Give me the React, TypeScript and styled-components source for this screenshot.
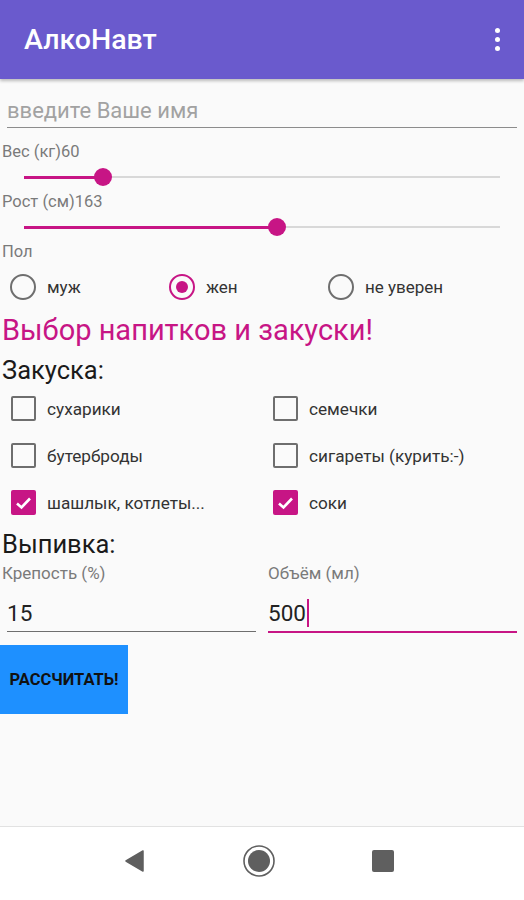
import React from 'react';
import styled, { createGlobalStyle } from 'styled-components';

const ACCENT = '#c71585';
const PRIMARY = '#6a5acd';

const GlobalStyle = createGlobalStyle`
  html, body {
    margin: 0;
    padding: 0;
    background: #fafafa;
  }
  body {
    font-family: Roboto, "Noto Sans", "Liberation Sans", sans-serif;
  }
`;

const Screen = styled.div`
  display: flex;
  flex-direction: column;
  width: 524px;
  height: 900px;
  background: #fafafa;
  overflow: hidden;
`;

const AppBar = styled.header`
  display: flex;
  align-items: center;
  justify-content: space-between;
  height: 79px;
  padding: 0 22px 0 24px;
  background: ${PRIMARY};
  box-shadow: 0 2px 3px rgba(0, 0, 0, 0.25);
  position: relative;
  z-index: 1;
`;

const Title = styled.h1`
  margin: 0;
  color: #fff;
  font-size: 28.5px;
  font-weight: 500;
`;

const MenuDots = styled.div`
  display: flex;
  flex-direction: column;
  gap: 4px;
  padding: 0 2px;

  span {
    width: 5px;
    height: 5px;
    border-radius: 50%;
    background: #fff;
  }
`;

const Main = styled.main`
  flex: 1;
  display: flex;
  flex-direction: column;
`;

const NameField = styled.div`
  margin: 15px 7px 0 7px;
  height: 33px;
  line-height: 33px;
  border-bottom: 1.5px solid #8c8c8c;
  font-size: 22px;
  color: #a2a2a2;
`;

const FieldLabel = styled.div<{ $top?: number; $indent?: number; $size?: number }>`
  margin-top: ${(p) => p.$top ?? 0}px;
  padding-left: ${(p) => p.$indent ?? 2}px;
  height: 20px;
  line-height: 20px;
  font-size: ${(p) => p.$size ?? 16.5}px;
  color: #7a7a7a;
  white-space: nowrap;
`;

const SliderRow = styled.div`
  position: relative;
  height: 30px;
  margin: 0 24px;
`;

const Track = styled.div`
  position: absolute;
  left: 0;
  right: 0;
  top: 14px;
  height: 2px;
  background: #d8d8d8;
`;

const ActiveTrack = styled.div`
  position: absolute;
  left: 0;
  top: 14px;
  height: 3px;
  background: ${ACCENT};
`;

const Thumb = styled.div`
  position: absolute;
  top: 6px;
  width: 18px;
  height: 18px;
  margin-left: -9px;
  border-radius: 50%;
  background: ${ACCENT};
`;

const RadioGroup = styled.div`
  display: grid;
  grid-template-columns: 159px 159px 1fr;
  height: 40px;
  margin-top: 5px;
  align-items: center;
`;

const RadioItem = styled.label`
  display: flex;
  align-items: center;
  gap: 11px;
  padding-left: 10px;
  font-size: 17px;
  color: #333;
`;

const RadioCircle = styled.span<{ $checked?: boolean }>`
  box-sizing: border-box;
  display: flex;
  align-items: center;
  justify-content: center;
  width: 26px;
  height: 26px;
  border-radius: 50%;
  border: 2.5px solid ${(p) => (p.$checked ? ACCENT : '#6e6e6e')};

  &::after {
    content: '';
    display: ${(p) => (p.$checked ? 'block' : 'none')};
    width: 12px;
    height: 12px;
    border-radius: 50%;
    background: ${ACCENT};
  }
`;

const Heading = styled.h2`
  margin: 6px 0 0 2px;
  height: 34px;
  line-height: 34px;
  font-size: 29px;
  font-weight: 400;
  color: ${ACCENT};
  white-space: nowrap;
`;

const SectionTitle = styled.h3<{ $top: number }>`
  margin: ${(p) => p.$top}px 0 0 2px;
  height: 30px;
  line-height: 30px;
  font-size: 25.5px;
  font-weight: 400;
  color: #1a1a1a;
`;

const CheckGrid = styled.div`
  display: grid;
  grid-template-columns: 262px 1fr;
  grid-auto-rows: 47px;
`;

const CheckItem = styled.label`
  display: flex;
  align-items: center;
  gap: 11px;
  padding-left: 11px;
  font-size: 17.2px;
  color: #333;
  white-space: nowrap;
`;

const CheckBox = styled.span<{ $checked?: boolean }>`
  box-sizing: border-box;
  display: flex;
  align-items: center;
  justify-content: center;
  flex-shrink: 0;
  width: 25px;
  height: 25px;
  border-radius: 2px;
  border: ${(p) => (p.$checked ? 'none' : '2.5px solid #6e6e6e')};
  background: ${(p) => (p.$checked ? ACCENT : 'transparent')};
`;

const DrinkGrid = styled.div`
  display: grid;
  grid-template-columns: 262px 1fr;
  margin-top: 4px;
`;

const ValueField = styled.div<{ $focused?: boolean }>`
  display: flex;
  align-items: center;
  margin: 12px ${(p) => (p.$focused ? 7 : 6)}px 0 ${(p) => (p.$focused ? 6 : 7)}px;
  height: 36px;
  font-size: 22.5px;
  color: #222;
  border-bottom: ${(p) => (p.$focused ? `2px solid ${ACCENT}` : '1.5px solid #6e6e6e')};
`;

const Caret = styled.span`
  display: inline-block;
  width: 2px;
  height: 28px;
  margin-left: 1px;
  background: ${ACCENT};
`;

const CalcButton = styled.button`
  margin-top: 12px;
  width: 128px;
  height: 69px;
  padding: 0;
  border: none;
  background: #1e90ff;
  font-family: Roboto, "Liberation Sans", sans-serif;
  font-size: 16.5px;
  font-weight: 700;
  color: #111;
  text-transform: uppercase;
`;

const NavBar = styled.nav`
  display: flex;
  justify-content: center;
  align-items: center;
  height: 74px;
  padding-bottom: 6px;
  box-sizing: border-box;
  border-top: 1.5px solid #e2e2e2;
  background: #fff;
`;

const NavButton = styled.div<{ $shift?: number }>`
  display: flex;
  align-items: center;
  justify-content: center;
  width: 124px;
  height: 40px;
  margin-left: ${(p) => p.$shift ?? 0}px;
`;

const CheckMark = () => (
  <svg width="17" height="14" viewBox="0 0 17 14">
    <path d="M2 7.5 L6.5 11.5 L15 2.5" fill="none" stroke="#fff" strokeWidth="2.6" />
  </svg>
);

const Slider = ({ percent }: { percent: number }) => (
  <SliderRow>
    <Track />
    <ActiveTrack style={{ width: `${percent}%` }} />
    <Thumb style={{ left: `${percent}%` }} />
  </SliderRow>
);

const snacks = [
  { label: 'сухарики', checked: false },
  { label: 'семечки', checked: false },
  { label: 'бутерброды', checked: false },
  { label: 'сигареты (курить:-)', checked: false },
  { label: 'шашлык, котлеты...', checked: true },
  { label: 'соки', checked: true },
];

const genders = [
  { label: 'муж', checked: false },
  { label: 'жен', checked: true },
  { label: 'не уверен', checked: false },
];

export default function App() {
  return (
    <Screen>
      <GlobalStyle />
      <AppBar>
        <Title>АлкоНавт</Title>
        <MenuDots>
          <span />
          <span />
          <span />
        </MenuDots>
      </AppBar>
      <Main>
        <NameField>введите Ваше имя</NameField>

        <FieldLabel $top={14}>Вес (кг)60</FieldLabel>
        <Slider percent={16.6} />
        <FieldLabel>Рост (см)163</FieldLabel>
        <Slider percent={53.2} />
        <FieldLabel>Пол</FieldLabel>

        <RadioGroup>
          {genders.map((g) => (
            <RadioItem key={g.label}>
              <RadioCircle $checked={g.checked} />
              {g.label}
            </RadioItem>
          ))}
        </RadioGroup>

        <Heading>Выбор напитков и закуски!</Heading>
        <SectionTitle $top={8}>Закуска:</SectionTitle>
        <CheckGrid>
          {snacks.map((s) => (
            <CheckItem key={s.label}>
              <CheckBox $checked={s.checked}>{s.checked && <CheckMark />}</CheckBox>
              {s.label}
            </CheckItem>
          ))}
        </CheckGrid>

        <SectionTitle $top={3}>Выпивка:</SectionTitle>
        <DrinkGrid>
          <div>
            <FieldLabel $size={17}>Крепость (%)</FieldLabel>
            <ValueField>15</ValueField>
          </div>
          <div>
            <FieldLabel $size={17} $indent={6}>Объём (мл)</FieldLabel>
            <ValueField $focused>
              500
              <Caret />
            </ValueField>
          </div>
        </DrinkGrid>

        <CalcButton>Рассчитать!</CalcButton>
      </Main>
      <NavBar>
        <NavButton $shift={-6}>
          <svg width="24" height="24" viewBox="0 0 24 24">
            <path d="M20 2 L20 22 L3 12 Z" fill="#5f5f5f" stroke="#5f5f5f" strokeWidth="1.5" strokeLinejoin="round" />
          </svg>
        </NavButton>
        <NavButton>
          <svg width="34" height="34" viewBox="0 0 34 34">
            <circle cx="17" cy="17" r="15" fill="none" stroke="#5f5f5f" strokeWidth="1.6" />
            <circle cx="17" cy="17" r="11" fill="#5f5f5f" />
          </svg>
        </NavButton>
        <NavButton>
          <svg width="24" height="24" viewBox="0 0 24 24">
            <rect x="1" y="1" width="22" height="22" rx="2" fill="#5f5f5f" />
          </svg>
        </NavButton>
      </NavBar>
    </Screen>
  );
}
